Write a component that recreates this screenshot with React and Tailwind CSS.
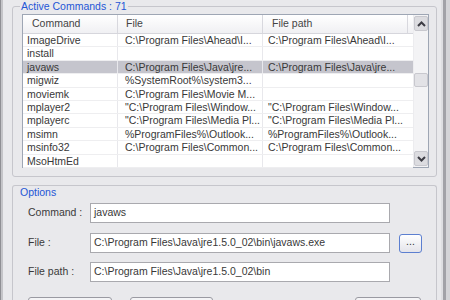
import React from 'react';

const rows = [
    ['ImageDrive', 'C:\\Program Files\\Ahead\\I...', 'C:\\Program Files\\Ahead\\I...'],
    ['install', '', ''],
    ['javaws', 'C:\\Program Files\\Java\\jre...', 'C:\\Program Files\\Java\\jre...'],
    ['migwiz', '%SystemRoot%\\system3...', ''],
    ['moviemk', 'C:\\Program Files\\Movie M...', ''],
    ['mplayer2', '"C:\\Program Files\\Window...', '"C:\\Program Files\\Window...'],
    ['mplayerc', '"C:\\Program Files\\Media Pl...', '"C:\\Program Files\\Media Pl...'],
    ['msimn', '%ProgramFiles%\\Outlook...', '%ProgramFiles%\\Outlook...'],
    ['msinfo32', 'C:\\Program Files\\Common...', 'C:\\Program Files\\Common...'],
    ['MsoHtmEd', '', ''],
];

const Chevron = ({ up }) => (
    <svg width="9" height="6" viewBox="0 0 9 6">
        <polyline
            points={up ? '1,5 4.5,1.5 8,5' : '1,1 4.5,4.5 8,1'}
            fill="none"
            stroke="#3c3c44"
            strokeWidth="2"
        />
    </svg>
);

const Field = ({ label, value, className = '', children }) => (
    <div className={`flex items-center h-[20px] shrink-0 ${className}`}>
        <div className="w-[62px] text-[#3a3a3a]">{label}</div>
        <div className="w-[300px] h-[20px] bg-white border border-[#a9a9ae] px-[3px] flex items-center whitespace-nowrap overflow-hidden">
            {value}
        </div>
        {children}
    </div>
);

const App = () => {
    return (
        <div className="w-[450px] h-[300px] overflow-hidden flex bg-[#e9e9ec] text-[10.5px] text-[#383838] font-['Liberation_Sans',Arial,sans-serif]">
            {/* left window frame */}
            <div className="w-[3px] bg-[#c4c4c8] border-l border-[#8f8f94]"></div>

            <div className="flex-1 flex flex-col pl-[9px] pr-[4px] overflow-hidden">
                {/* Active commands group */}
                <div className="shrink-0 mt-[6px] h-[171px] border border-[#c6c6cc] rounded-[3px] flex flex-col">
                    <div className="-mt-[7px] ml-[7px] h-[12px] leading-[12px] px-[1px] w-fit bg-[#e9e9ec] text-[#2456d6]">
                        Active Commands : 71
                    </div>
                    <div className="shrink-0 mt-[2px] ml-[9px] mr-[7px] h-[154px] border border-[#9ea6b4] bg-white flex">
                        <div className="w-[390px] flex flex-col">
                            {/* header */}
                            <div className="shrink-0 h-[19px] flex border-b border-[#d6d6dc] bg-gradient-to-b from-[#ffffff] to-[#f0f0f3] text-[#444]">
                                <div className="w-[95px] pl-[9px] flex items-center border-r border-[#d8d8de]">Command</div>
                                <div className="w-[145px] pl-[8px] flex items-center border-r border-[#d8d8de]">File</div>
                                <div className="w-[145px] pl-[9px] flex items-center border-r border-[#d8d8de]">File path</div>
                            </div>
                            {rows.map((r, i) => (
                                <div
                                    key={r[0]}
                                    className={`shrink-0 h-[13.4px] flex leading-[13px] border-b border-[#eeeef0] ${i === 2 ? 'bg-[#c5c5cd]' : ''}`}
                                >
                                    <div className="w-[95px] pl-[4px] border-r border-[#e8e8ec] whitespace-nowrap overflow-hidden">{r[0]}</div>
                                    <div className="w-[145px] pl-[7px] border-r border-[#e8e8ec] whitespace-nowrap overflow-hidden">{r[1]}</div>
                                    <div className="w-[145px] pl-[5px] whitespace-nowrap overflow-hidden">{r[2]}</div>
                                </div>
                            ))}
                        </div>
                        {/* scrollbar */}
                        <div className="w-[15px] flex flex-col bg-[#f3f3f5] border-l border-[#ececef]">
                            <div className="mt-[1px] h-[15px] bg-[#dcdce0] border border-[#c8c8ce] rounded-[2px] flex items-center justify-center">
                                <Chevron up />
                            </div>
                            <div className="mt-[42px] h-[14px] bg-[#e2e2e6] border border-[#c8c8ce] rounded-[2px]"></div>
                            <div className="flex-1"></div>
                            <div className="mb-[1px] h-[15px] bg-[#dcdce0] border border-[#c8c8ce] rounded-[2px] flex items-center justify-center">
                                <Chevron />
                            </div>
                        </div>
                    </div>
                </div>

                {/* Options group */}
                <div className="shrink-0 mt-[8px] h-[140px] border border-[#c6c6cc] border-b-0 rounded-t-[3px] flex flex-col">
                    <div className="shrink-0 ml-[7px] h-[12px] leading-[12px] text-[#2456d6]">Options</div>
                    <div className="shrink-0 mt-[5px] pl-[15px] flex flex-col">
                        <Field label="Command :" value="javaws" />
                        <Field label="File :" value={'C:\\Program Files\\Java\\jre1.5.0_02\\bin\\javaws.exe'} className="mt-[10px]">
                            <div className="ml-[9px] w-[23px] h-[19px] rounded-[3px] border border-[#5c7fd0] bg-gradient-to-b from-[#ffffff] to-[#e4e4ea] flex items-center justify-center text-[#333] leading-none pb-[3px]">
                                ...
                            </div>
                        </Field>
                        <Field label="File path :" value={'C:\\Program Files\\Java\\jre1.5.0_02\\bin'} className="mt-[9px]" />
                    </div>
                    <div className="shrink-0 mt-[15px] pl-[15px] pr-[15px] flex">
                        <div className="w-[84px] h-[22px] border border-[#9a9aa2] rounded-[3px] bg-[#f4f4f6]"></div>
                        <div className="ml-[18px] w-[83px] h-[22px] border border-[#9a9aa2] rounded-[3px] bg-[#f4f4f6]"></div>
                        <div className="ml-auto w-[66px] h-[22px] border border-[#9a9aa2] rounded-[3px] bg-[#f4f4f6]"></div>
                    </div>
                </div>
            </div>

            {/* right window frame */}
            <div className="w-[9px] flex">
                <div className="w-[2px] bg-[#dedee2]"></div>
                <div className="w-[3px] bg-[#a2a2a8]"></div>
                <div className="w-[4px] bg-[#d4d4d8]"></div>
            </div>
        </div>
    );
};

export default App;
